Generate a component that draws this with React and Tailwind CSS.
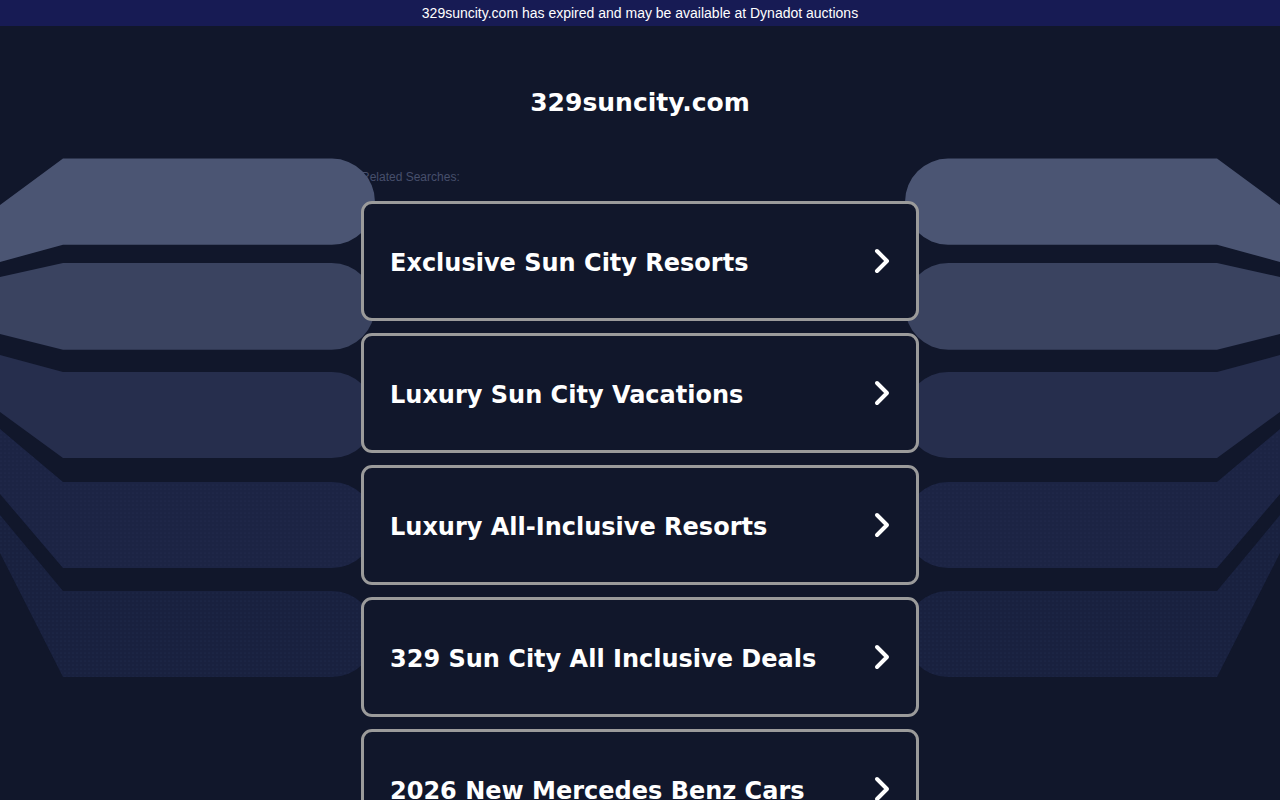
import React from 'react';

const searches = [
  'Exclusive Sun City Resorts',
  'Luxury Sun City Vacations',
  'Luxury All-Inclusive Resorts',
  '329 Sun City All Inclusive Deals',
  '2026 New Mercedes Benz Cars',
];

// left-hand bands: top, bottom, and where the slanted edges meet x=0
const bands = [
  { t: 158.6, b: 244.7, lt: 205, lb: 262, fill: '#4b5573' },
  { t: 263, b: 349.7, lt: 277, lb: 334, fill: '#3a4360' },
  { t: 372, b: 458, lt: 355, lb: 412, fill: '#262e4d' },
  { t: 482, b: 568, lt: 429, lb: 494, fill: '#1c2444', dots: true },
  { t: 591, b: 677, lt: 515, lb: 553, fill: '#19213f', dots: true },
];

const bandPath = (s, mirror) => {
  const r = (s.b - s.t) / 2;
  const X = (x) => (mirror ? 1280 - x : x);
  const sweep = mirror ? 0 : 1;
  return `M ${X(0)} ${s.lt} L ${X(63)} ${s.t} L ${X(375 - r)} ${s.t} A ${r} ${r} 0 0 ${sweep} ${X(375 - r)} ${s.b} L ${X(63)} ${s.b} L ${X(0)} ${s.lb} Z`;
};

const Backdrop = () => (
  <svg className="absolute left-0 top-0" width="1280" height="800" viewBox="0 0 1280 800" aria-hidden="true">
    <defs>
      <pattern id="dots" width="4" height="4" patternUnits="userSpaceOnUse">
        <circle cx="1" cy="1" r="0.5" fill="#34406a" opacity="0.45" />
      </pattern>
    </defs>
    {bands.map((s, i) => (
      <g key={i}>
        <path d={bandPath(s, false)} fill={s.fill} />
        <path d={bandPath(s, true)} fill={s.fill} />
        {s.dots && <path d={bandPath(s, false)} fill="url(#dots)" />}
        {s.dots && <path d={bandPath(s, true)} fill="url(#dots)" />}
      </g>
    ))}
  </svg>
);

const Chevron = () => (
  <svg width="20" height="28" viewBox="0 0 20 28" fill="none">
    <path d="M5 4 L15 14 L5 24" stroke="white" strokeWidth="4" strokeLinecap="round" strokeLinejoin="round" />
  </svg>
);

export default function App() {
  return (
    <div className="relative min-h-screen bg-[#11172b] overflow-hidden">
      <div className="h-[26px] bg-[#171b54] flex items-center justify-center text-white text-[14px] font-['Liberation_Sans',Arial,sans-serif]">
        329suncity.com has expired and may be available at Dynadot auctions
      </div>

      <h1 className="mt-[61px] text-center text-white font-bold text-[25px] leading-[32px] font-['DejaVu_Sans',Verdana,sans-serif]">
        329suncity.com
      </h1>

      <div className="w-[558px] mx-auto mt-[51px]">
        <div className="text-[12px] leading-[14px] text-[#474f6b] font-['Liberation_Sans',Arial,sans-serif]">
          Related Searches:
        </div>
      </div>

      <Backdrop />

      <div className="relative w-[558px] mx-auto mt-[17px] flex flex-col gap-[12px] pb-10">
        {searches.map((s) => (
          <a
            key={s}
            href="#"
            className="h-[120px] rounded-[11px] border-[3px] border-[#9b9b9b] bg-[#11172b] flex items-center justify-between pl-[26px] pr-[24px] text-white font-bold text-[24px] font-['DejaVu_Sans',Verdana,sans-serif]"
          >
            <span className="block pt-[4px]">{s}</span>
            <Chevron />
          </a>
        ))}
      </div>
    </div>
  );
}
